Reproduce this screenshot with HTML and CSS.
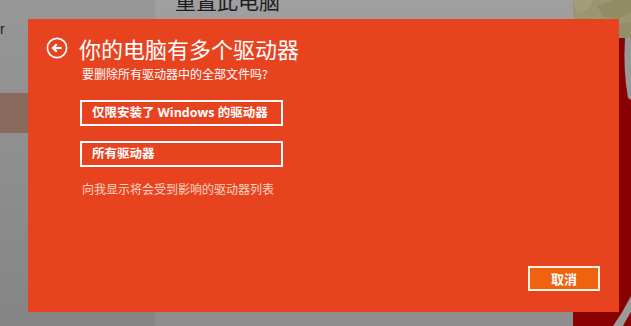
FILE: index.html
```html
<!DOCTYPE html>
<html lang="zh-CN">
<head>
<meta charset="utf-8">
<title>重置此电脑</title>
<link rel="stylesheet" href="styles.css">
</head>
<body>
<div class="screen">
  <aside class="sidebar">
    <div class="side-text">r</div>
    <div class="side-selected"></div>
  </aside>
  <main class="main">
    <h2 class="page-title">重置此电脑</h2>
  </main>
  <div class="wallpaper">
    <svg width="58" height="326" viewBox="0 0 58 326">
      <rect x="0" y="0" width="58" height="326" fill="#8a0303"/>
      <rect x="0" y="0" width="58" height="38" fill="#9b9672"/>
      <path d="M0 0H20L14 10L4 14Z" fill="#a49d78"/>
      <path d="M24 6L40 0H58V12L44 20L30 16Z" fill="#8f8c66"/>
      <path d="M6 24L22 18L34 30L18 38H2Z" fill="#a7a07c"/>
      <path d="M38 26L58 22V38H42Z" fill="#938f6a"/>
      <path d="M52 38H58V100L55 98Q50 70 52 38Z" fill="#979797"/>
      <path d="M58 296Q50 312 40 326H50Q54 318 58 312Z" fill="#9a9a9a"/>
    </svg>
  </div>
</div>

<section class="dialog">
  <div class="header">
    <svg class="back" width="22" height="22" viewBox="0 0 22 22">
      <circle cx="11" cy="11" r="9.6" fill="none" stroke="#fff" stroke-width="1.7"/>
      <path d="M15.6 11H7.2" fill="none" stroke="#fff" stroke-width="2.2"/>
      <path d="M10.8 7.2L7 11L10.8 14.8" fill="none" stroke="#fff" stroke-width="2.2" stroke-linejoin="miter"/>
    </svg>
    <h1 class="title">你的电脑有多个驱动器</h1>
  </div>
  <div class="content">
    <p class="subtitle">要删除所有驱动器中的全部文件吗?</p>
    <button class="option option-first">仅限安装了 Windows 的驱动器</button>
    <button class="option option-second">所有驱动器</button>
    <a class="link">向我显示将会受到影响的驱动器列表</a>
  </div>
  <div class="footer">
    <button class="cancel">取消</button>
  </div>
</section>
</body>
</html>
```

FILE: styles.css
```css
html, body {
  margin: 0;
  padding: 0;
}

body {
  width: 631px;
  height: 326px;
  overflow: hidden;
  position: relative;
  font-family: "Noto Sans CJK SC", "Noto Sans", sans-serif;
  background: #929292;
}

.screen {
  display: flex;
  width: 631px;
  height: 326px;
}

.sidebar {
  width: 155px;
  flex: none;
  background: linear-gradient(#979797, #858585);
  display: flex;
  flex-direction: column;
}

.side-text {
  font-family: "Liberation Sans", sans-serif;
  font-size: 14px;
  line-height: 16px;
  color: #1c1c1c;
  margin-top: 21px;
  padding-left: 0;
}

.side-selected {
  margin-top: 56px;
  height: 40px;
  background: #8a6a5c;
}

.main {
  flex: 1;
  background: linear-gradient(#9f9f9f, #8e8e8e);
}

.page-title {
  margin: -12px 0 0 20px;
  font-size: 21px;
  line-height: 24px;
  font-weight: normal;
  color: #1e1e1e;
}

.wallpaper {
  width: 58px;
  flex: none;
}

.wallpaper svg {
  display: block;
}

.dialog {
  position: absolute;
  left: 28px;
  top: 19px;
  width: 591px;
  height: 293px;
  box-sizing: border-box;
  padding: 14px 19px 21px 18px;
  display: flex;
  flex-direction: column;
  background: #e8431f;
  color: #fff;
}

.header {
  display: flex;
  align-items: center;
  gap: 11px;
  height: 30px;
}

.back {
  display: block;
  flex: none;
}

.title {
  margin: 0;
  font-size: 22px;
  line-height: 30px;
  font-weight: normal;
}

.content {
  margin-left: 34px;
  display: flex;
  flex-direction: column;
  align-items: flex-start;
}

.subtitle {
  margin: 3px 0 0;
  padding-left: 2px;
  font-size: 12px;
  line-height: 16px;
}

.option {
  width: 203px;
  height: 26px;
  box-sizing: border-box;
  border: 2px solid #fff;
  background: transparent;
  color: #fff;
  padding: 0 10px;
  text-align: left;
  font-family: "Open Sans", "Noto Sans CJK SC", sans-serif;
  font-weight: bold;
  font-size: 12.5px;
  line-height: 20px;
}

.option-first {
  margin-top: 18px;
}

.option-second {
  margin-top: 15px;
}

.link {
  margin-top: 14px;
  padding-left: 2px;
  font-size: 12px;
  line-height: 16px;
  color: #fbd6c8;
}

.footer {
  margin-top: auto;
  display: flex;
  justify-content: flex-end;
}

.cancel {
  width: 72px;
  height: 25px;
  box-sizing: border-box;
  border: 2px solid #fff3e4;
  background: #f0620f;
  color: #fff;
  padding: 0;
  font-family: "Noto Sans CJK SC", sans-serif;
  font-weight: bold;
  font-size: 13px;
  line-height: 19px;
}
```
